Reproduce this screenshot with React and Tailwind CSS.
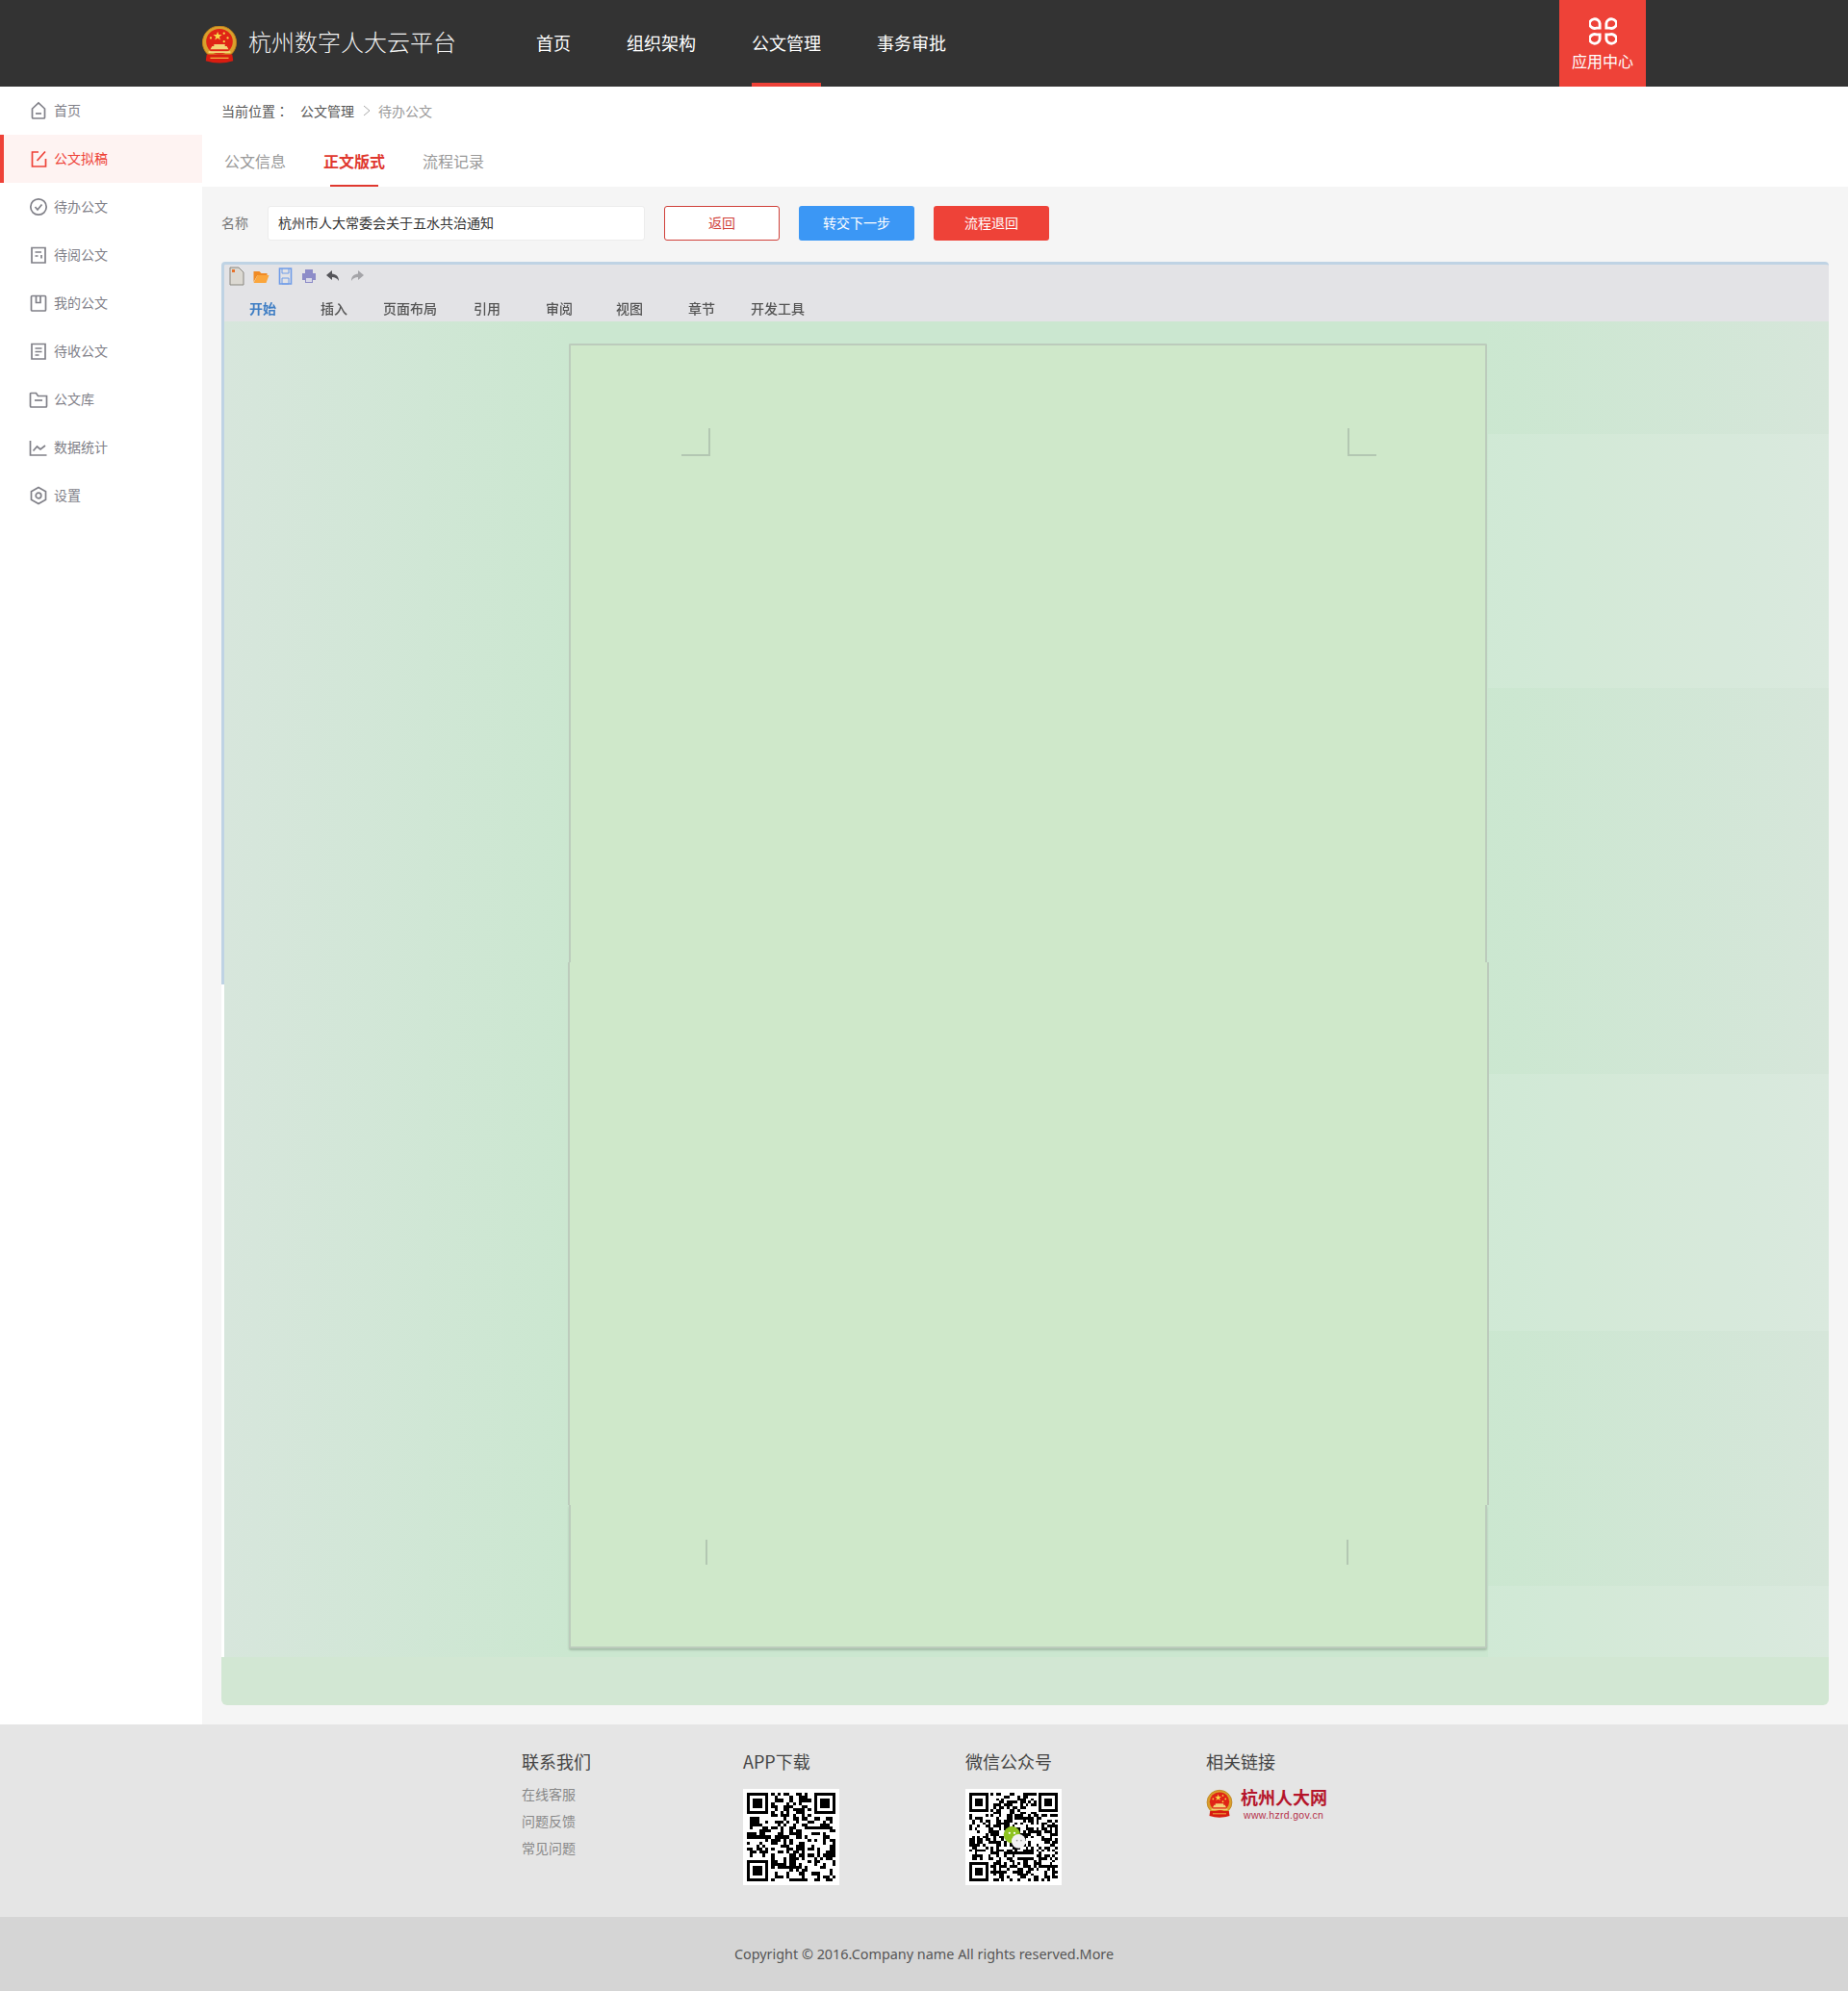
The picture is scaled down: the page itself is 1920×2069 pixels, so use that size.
import React from 'react';

const menu = [
  { label: '首页', icon: 'home' },
  { label: '公文拟稿', icon: 'edit', active: true },
  { label: '待办公文', icon: 'check' },
  { label: '待阅公文', icon: 'read' },
  { label: '我的公文', icon: 'book' },
  { label: '待收公文', icon: 'list' },
  { label: '公文库', icon: 'folder' },
  { label: '数据统计', icon: 'chart' },
  { label: '设置', icon: 'gear' },
];

const SideIcon = ({ name }) => {
  const shapes = {
    home: <><path d="M3.500 8 10 2l6.500 6v9a1 1 0 0 1-1 1h-11a1 1 0 0 1-1-1z" /><path d="M7 13h6" /></>,
    edit: <><path d="M10 3H3.500v15h14v-8" /><path d="M8.500 12 17 2.500" /></>,
    check: <><circle cx="10" cy="10" r="8.200" /><path d="m6.500 10 2.500 3 4.500-5.500" /></>,
    read: <><path d="M3 2.500h14v15.500H3z" /><path d="M6.500 7H13M6.500 11h3M13 10v3.500" /></>,
    book: <><path d="M3.500 2.500h13a1 1 0 0 1 1 1v13.500a1 1 0 0 1-1 1h-13a1 1 0 0 1-1-1V3.500a1 1 0 0 1 1-1z" /><path d="M7.500 3v6.500h4.500V3" /></>,
    list: <><path d="M3 2.500h14v15.500H3z" /><path d="M6.500 7h7M6.500 10.500h7M6.500 14h4" /></>,
    folder: <><path d="M1.500 4v13a1 1 0 0 0 1 1h15a1 1 0 0 0 1-1V6.500h-9L7.500 3.500h-5a1 1 0 0 0-1 .5z" /><path d="M6 11h8" /></>,
    chart: <><path d="M1.500 3v15h17" /><path d="m4.500 13.500 4-4.500 3.500 3 5-4" /></>,
    gear: <><path d="m10 1.500 7.500 4.250v8.500L10 18.500l-7.500-4.250v-8.500z" /><circle cx="10" cy="10" r="2.800" /></>,
  };
  return (
    <svg viewBox="0 0 20 20" className="w-[20px] h-[20px]" fill="none" stroke="currentColor" strokeWidth="1.700">
      {shapes[name]}
    </svg>
  );
};

const Emblem = ({ className }) => (
  <svg viewBox="0 0 40 42" className={className}>
    <ellipse cx="20" cy="18" rx="18.500" ry="18" fill="#d9a02c" />
    <ellipse cx="20" cy="18" rx="18.500" ry="18" fill="none" stroke="#b87a18" strokeWidth="1" />
    <ellipse cx="20" cy="17" rx="14.500" ry="14" fill="#e02416" />
    <path d="m18 6 1.200 3.500h3.600l-2.900 2.200 1.100 3.500-3-2.100-3 2.100 1.100-3.500-2.900-2.200h3.600z" fill="#f8d84a" />
    <circle cx="10.500" cy="13" r="1.200" fill="#f8d84a" />
    <circle cx="25" cy="8" r="1.200" fill="#f8d84a" />
    <circle cx="29" cy="13" r="1.200" fill="#f8d84a" />
    <circle cx="25" cy="17" r="1.200" fill="#f8d84a" />
    <path d="M12 22h16l2 3.500H10zM14 20h12v2H14z" fill="#f3d477" />
    <path d="M8 27.500h24v2H8z" fill="#f3d477" />
    <path d="M6 31h28l1 7q-15 5-30 0z" fill="#d81c10" />
    <path d="M10 35h20" stroke="#f3c84a" strokeWidth="1.200" />
  </svg>
);

const buildQr = (seed, size) => {
  const cells = [];
  let s = seed;
  const next = () => {
    s = (s * 1103515245 + 12345) & 0x7fffffff;
    return (s >> 16) & 1;
  };
  const inFinder = (x, y) =>
    (x < 8 && y < 8) || (x >= size - 8 && y < 8) || (x < 8 && y >= size - 8);
  for (let y = 0; y < size; y++) {
    for (let x = 0; x < size; x++) {
      if (!inFinder(x, y) && next()) cells.push([x, y]);
    }
  }
  return cells;
};

const Finder = ({ x, y }) => (
  <>
    <path d={`M${x} ${y}h7v7h-7z M${x + 1} ${y + 1}v5h5v-5z`} fillRule="evenodd" fill="#000" />
    <rect x={x + 2} y={y + 2} width="3" height="3" fill="#000" />
  </>
);

const Qr = ({ seed, size, wechat }) => (
  <div className="relative w-[100px] h-[100px] bg-white p-[4px]">
    <svg viewBox={`0 0 ${size} ${size}`} className="w-[92px] h-[92px] blur-[0.3px]" shapeRendering="crispEdges">
      {buildQr(seed, size).map(([x, y]) => (
        <rect key={`${x}-${y}`} x={x} y={y} width="1" height="1" fill="#000" />
      ))}
      <Finder x={0} y={0} />
      <Finder x={size - 7} y={0} />
      <Finder x={0} y={size - 7} />
    </svg>
    {wechat && (
      <svg viewBox="0 0 30 30" className="absolute left-[38px] top-[38px] w-[26px] h-[26px]">
        <ellipse cx="12" cy="11" rx="10" ry="10" fill="#8ec31f" />
        <ellipse cx="20" cy="19" rx="8.500" ry="8.500" fill="#f2f2f2" />
        <circle cx="9" cy="9" r="1.300" fill="#fff" />
        <circle cx="15" cy="9" r="1.300" fill="#fff" />
        <circle cx="18" cy="18" r="1" fill="#999" />
        <circle cx="23" cy="18" r="1" fill="#999" />
      </svg>
    )}
  </div>
);

const Toolbar = () => (
  <div className="h-[62px] bg-[#e3e3e6] border-t-[3px] border-l-[3px] border-[#bfd3e4] rounded-t-[4px]">
    <div className="flex items-center h-[24px] pl-[5px] gap-[9px] blur-[0.5px]">
      <svg viewBox="0 0 16 20" className="w-[16px] h-[20px]"><path d="M1 1h9l5 5v13H1z" fill="#dcd9d2" stroke="#8a8780" /><path d="M3 3h3v3H3z" fill="#e8722a" /></svg>
      <svg viewBox="0 0 16 14" className="w-[17px] h-[14px]"><path d="M0 2h6l2 2h6v2H4L0 13z" fill="#f08a24" /><path d="M4 6h12l-3 8H0z" fill="#fba63c" /></svg>
      <svg viewBox="0 0 14 18" className="w-[15px] h-[18px]"><path d="M1 1h12v16H1z" fill="none" stroke="#6f9ce8" strokeWidth="1.600" /><path d="M3.500 1v5h7V1M3.500 11h7v6h-7z" fill="none" stroke="#6f9ce8" /></svg>
      <svg viewBox="0 0 16 16" className="w-[16px] h-[16px]"><path d="M4 1h8v4H4zM1 5h14v7h-3v3H4v-3H1z" fill="#8d8cc8" /><path d="M5 10h6v4H5z" fill="#d8d8e8" /></svg>
      <svg viewBox="0 0 16 14" className="w-[16px] h-[14px]"><path d="M7 1 1 6l6 5V8c3 0 5 1 7 4 0-5-3-7-7-7.500z" fill="#55555a" /></svg>
      <svg viewBox="0 0 16 14" className="w-[16px] h-[14px]"><path d="m9 1 6 5-6 5V8c-3 0-5 1-7 4 0-5 3-7 7-7.500z" fill="#a4a4a8" /></svg>
    </div>
    <div className="flex items-center h-[35px] pt-[7px] text-[14px] text-[#555] font-medium blur-[0.5px]">
      <span className="w-[80px] text-center text-[#3f7ec4] font-bold">开始</span>
      <span className="w-[68px] text-center">插入</span>
      <span className="w-[90px] text-center">页面布局</span>
      <span className="w-[70px] text-center">引用</span>
      <span className="w-[80px] text-center">审阅</span>
      <span className="w-[66px] text-center">视图</span>
      <span className="w-[84px] text-center">章节</span>
      <span className="w-[74px] text-center">开发工具</span>
    </div>
  </div>
);

const DocPage = () => (
  <div className="relative z-10 w-[957px] ml-[357px]">
    <div className="h-[643px] ml-[1px] mr-[2px] bg-[#cfe8ca] border-x-2 border-t-2 border-[#bccbbc] rounded-t-[2px]" />
    <div className="h-[564px] bg-[#cfe8ca] border-x-2 border-[#bccbbc]" />
    <div className="h-[149px] ml-[1px] mr-[2px] bg-[#cfe8ca] border-x-2 border-b-2 border-[#bccbbc] rounded-b-[2px] shadow-[0_2px_2px_rgba(110,130,110,0.4)]" />
    {/* crop marks */}
    <div className="absolute left-[118px] top-[88px] w-[30px] h-[29px] border-r-2 border-b-2 border-[#b3c7b2]" />
    <div className="absolute left-[810px] top-[88px] w-[30px] h-[29px] border-l-2 border-b-2 border-[#b3c7b2]" />
    <div className="absolute left-[143px] top-[1243px] w-[2px] h-[26px] bg-[#b3c7b2]" />
    <div className="absolute left-[809px] top-[1243px] w-[2px] h-[26px] bg-[#b3c7b2]" />
  </div>
);

const Viewer = () => (
  <div className="w-[1670px] ml-[20px] mt-[22px]">
    <Toolbar />
    <div className="relative h-[1388px] pt-[23px] bg-[linear-gradient(90deg,#d7e6dc_0%,#cbe7d0_21.500%,#cbe7d0_78.500%,#d6e6da_100%)] border-l-[3px] border-[#bfd3e4]">
      <DocPage />
      {/* lighter bands in the right gutter, white gap on the left */}
      <div className="absolute right-0 top-[117px] w-[354px] h-[264px] bg-white/10" />
      <div className="absolute right-0 top-[782px] w-[354px] h-[267px] bg-white/10" />
      <div className="absolute right-0 top-[1314px] w-[354px] h-[74px] bg-white/10" />
      <div className="absolute left-[-3px] top-[689px] bottom-0 w-[3px] bg-white" />
    </div>
    <div className="h-[50px] bg-[#d2e7d3] rounded-b-[6px]" />
  </div>
);

export default function App() {
  return (
    <div className="w-[1920px] bg-white text-[14px] font-['Noto_Sans_CJK_SC','Noto_Sans',sans-serif]">
      <header className="h-[90px] bg-[#333333] flex text-white">
        <div className="ml-[209px] mt-[27px]">
          <Emblem className="w-[38px] h-[40px]" />
        </div>
        <div className="ml-[11px] w-[215px] leading-[86px] text-[24px] font-light text-[#f2f2f2] whitespace-nowrap">杭州数字人大云平台</div>
        <nav className="ml-[84px] flex gap-[58px] text-[18px]">
          <a className="h-[90px] leading-[88px]">首页</a>
          <a className="h-[90px] leading-[88px]">组织架构</a>
          <a className="h-[90px] leading-[88px] border-b-4 border-[#ee4238]">公文管理</a>
          <a className="h-[90px] leading-[88px]">事务审批</a>
        </nav>
        <div className="ml-[637px] w-[90px] h-[90px] bg-[#ee4238] flex flex-col items-center pt-[18px]">
          <svg viewBox="0 0 30 30" className="w-[29px] h-[29px]" fill="none" stroke="#fff" strokeWidth="3">
            <path d="M11.500 11.500H8a5.500 5 0 1 1 3.500-5z" />
            <path d="M18.500 11.500H22a5.500 5 0 1 0-3.500-5z" />
            <path d="M11.500 18.500H8a5.500 5 0 1 0 3.500 5z" />
            <path d="M18.500 18.500H22a5.500 5 0 1 1-3.500 5z" />
          </svg>
          <span className="mt-[5px] text-[16px] leading-[22px]">应用中心</span>
        </div>
      </header>

      <div className="flex">
        <aside className="w-[210px] shrink-0 h-[1702px] bg-white">
          {menu.map((item) => (
            <div
              key={item.label}
              className={
                item.active
                  ? 'h-[50px] flex items-center pl-[26px] gap-[6px] border-l-4 border-[#ee4238] bg-[#fef3f2] text-[#ee4238]'
                  : 'h-[50px] flex items-center pl-[30px] gap-[6px] text-[#808088]'
              }
            >
              <SideIcon name={item.icon} />
              <span className="pb-[2px]">{item.label}</span>
            </div>
          ))}
        </aside>

        <main className="flex-1 h-[1702px] bg-[#f5f5f5]">
          <div className="h-[104px] bg-white">
            <div className="h-[52px] pl-[20px] pb-[2px] flex items-center">
              <span className="text-[#555] font-['Noto_Sans_CJK_TC','Noto_Sans_CJK_SC',sans-serif]">当前位置：</span>
              <span className="ml-[12px] text-[#555]">公文管理</span>
              <svg viewBox="0 0 8 12" className="ml-[9px] w-[8px] h-[12px]" fill="none" stroke="#aaa"><path d="m1 1 6 5-6 5" /></svg>
              <span className="ml-[8px] text-[#999]">待办公文</span>
            </div>
            <div className="flex gap-[39px] pl-[23px] text-[16px] text-[#999]">
              <span className="h-[52px] leading-[50px]">公文信息</span>
              <span className="relative h-[52px] leading-[50px] font-bold text-[#e0382f]">
                正文版式
                <span className="absolute left-[7px] bottom-0 w-[50px] h-[2px] bg-[#e0382f]" />
              </span>
              <span className="h-[52px] leading-[50px]">流程记录</span>
            </div>
          </div>

          <div className="flex items-center h-[36px] mt-[20px] ml-[20px]">
            <span className="w-[48px] pb-[2px] text-[#777]">名称</span>
            <div className="w-[392px] h-[36px] bg-white border border-[#ececec] rounded-[3px] pl-[10px] leading-[32px] text-[#333]">杭州市人大常委会关于五水共治通知</div>
            <button className="ml-[20px] w-[120px] h-[36px] pb-[2px] bg-white border border-[#d0413a] rounded-[3px] text-[#d0413a]">返回</button>
            <button className="ml-[20px] w-[120px] h-[36px] pb-[2px] bg-[#3b97f5] rounded-[3px] text-white">转交下一步</button>
            <button className="ml-[20px] w-[120px] h-[36px] pb-[2px] bg-[#ee4238] rounded-[3px] text-white">流程退回</button>
          </div>

          <Viewer />
        </main>
      </div>

      <footer>
        <div className="h-[200px] bg-[#e5e5e5] pl-[542px] flex">
          <div className="w-[230px] pt-[26px]">
            <h3 className="text-[18px] leading-[24px] text-[#444]">联系我们</h3>
            <ul className="mt-[8px] text-[#888] leading-[28px]">
              <li className="h-[28px]">在线客服</li>
              <li className="h-[28px]">问题反馈</li>
              <li className="h-[28px]">常见问题</li>
            </ul>
          </div>
          <div className="w-[231px] pt-[26px]">
            <h3 className="text-[18px] leading-[24px] text-[#444] mb-[17px]">APP下载</h3>
            <Qr seed={17} size={29} />
          </div>
          <div className="w-[250px] pt-[26px]">
            <h3 className="text-[18px] leading-[24px] text-[#444] mb-[17px]">微信公众号</h3>
            <Qr seed={4242} size={33} wechat />
          </div>
          <div className="pt-[26px]">
            <h3 className="text-[18px] leading-[24px] text-[#444] mb-[14px]">相关链接</h3>
            <div className="flex">
              <Emblem className="w-[28px] h-[32px] mt-[3px]" />
              <div className="ml-[8px]">
                <div className="text-[18px] leading-[22px] font-bold text-[#b5152b] whitespace-nowrap">杭州人大网</div>
                <div className="ml-[3px] text-[10.500px] leading-[16px] text-[#b5304a] tracking-[0.3px] font-['Liberation_Sans',sans-serif]">www.hzrd.gov.cn</div>
              </div>
            </div>
          </div>
        </div>
        <div className="h-[77px] bg-[#d5d5d5] flex items-center justify-center text-[14.400px] text-[#555] font-['Noto_Sans',sans-serif]">
          Copyright © 2016.Company name All rights reserved.More
        </div>
      </footer>
    </div>
  );
}
